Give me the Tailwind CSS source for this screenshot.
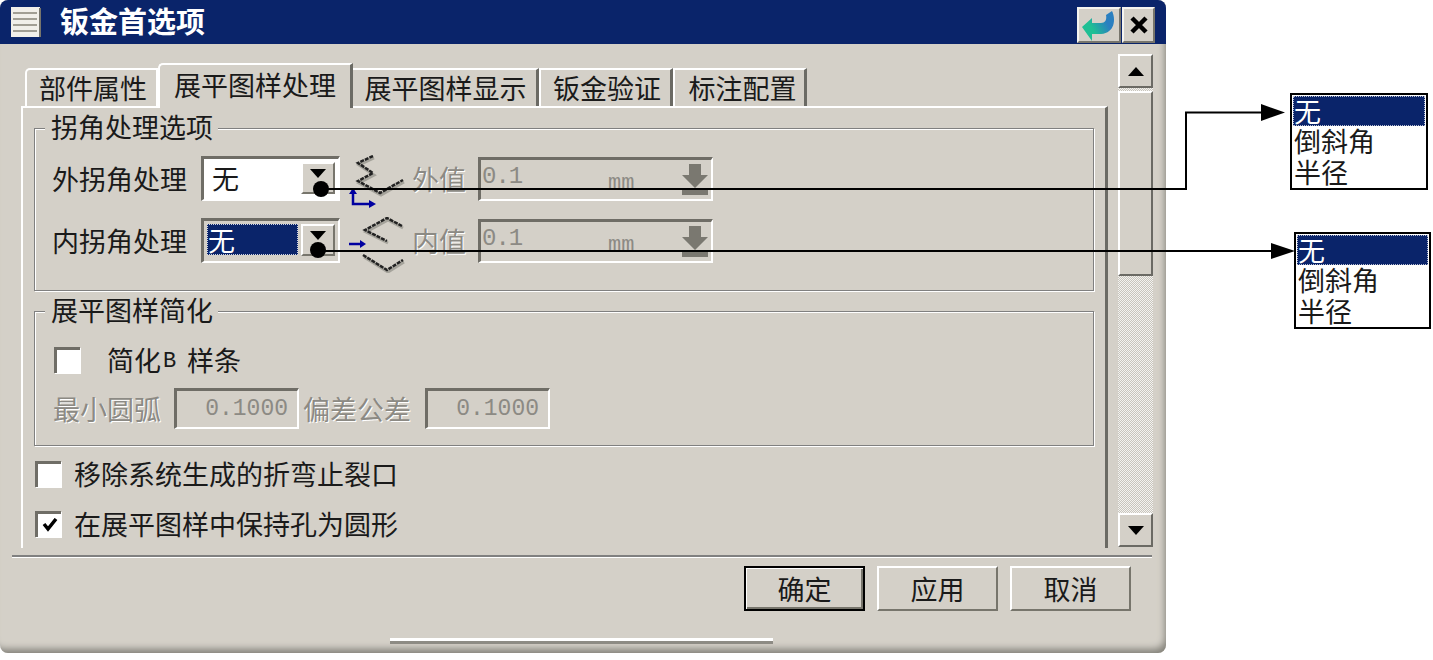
<!DOCTYPE html>
<html lang="zh"><head><meta charset="utf-8"><script src="https://cdn.jsdelivr.net/npm/@tailwindcss/browser@4"></script></head>
<body class="m-0 bg-white">
<div class="relative w-[1433px] h-[660px] overflow-hidden bg-white text-[27px] leading-none text-[#1a1a1a] font-['Noto_Sans_CJK_SC','Noto_Sans',sans-serif]">

<!-- dialog -->
<div class="flex flex-col w-[1166px] h-[653px] rounded-t-[8px] rounded-b-[8px] overflow-hidden bg-[#d4d0c8] shadow-[inset_-4px_-7px_7px_-3px_#85837b]">
  <!-- title -->
  <div class="flex items-center h-[44px] shrink-0 bg-[#0a246a] pl-[10px] pr-[11px]">
    <svg width="31" height="30" viewBox="0 0 31 30" class="shrink-0"><rect x="1" y="0" width="29" height="30" fill="#f1efea"/><rect x="29" y="1" width="2" height="29" fill="#77756c"/><g fill="#a19e94"><rect x="3" y="5" width="24" height="2"/><rect x="3" y="11" width="24" height="2"/><rect x="3" y="17" width="24" height="2"/><rect x="3" y="23" width="24" height="2"/></g></svg>
    <span class="ml-[19px] -mt-[4px] text-[29px] font-bold text-white">钣金首选项</span>
    <div class="ml-auto mt-[6px] flex gap-[1px]">
      <div class="flex items-center justify-center w-[44px] h-[36px] border-2 border-t-[#f5f4f0] border-l-[#f5f4f0] border-r-[#77756c] border-b-[#77756c] bg-[#d4d0c8]">
        <svg width="36" height="31" viewBox="0 0 36 31"><defs><linearGradient id="a" x1="0" x2="1" y1="0.7" y2="0.2"><stop offset="0.3" stop-color="#1fbf94"/><stop offset="0.75" stop-color="#2a7fc0"/></linearGradient></defs><path d="M1 17l10-9v5h9c4 0 6-3 5-8l6-4c4 8 3 22-11 23h-9v7z" fill="url(#a)"/></svg>
      </div>
      <div class="flex items-center justify-center w-[33px] h-[36px] border-2 border-t-[#f5f4f0] border-l-[#f5f4f0] border-r-[#77756c] border-b-[#77756c] bg-[#d4d0c8]">
        <svg width="20" height="20" viewBox="0 0 20 20"><path d="M3 3l14 14M17 3L3 17" stroke="#000" stroke-width="4.500"/></svg>
      </div>
    </div>
  </div>

  <!-- content -->
  <div class="flex h-[511px] shrink-0 pl-[21px]">
    <div class="w-[1087px] shrink-0 flex flex-col pt-[19px]">
      <!-- tabs -->
      <div class="relative z-10 flex items-end h-[43px] pl-[4px] shrink-0">
        <div class="flex items-center justify-center w-[133px] h-[38px] rounded-tl-[5px] border-l-2 border-t-2 border-r-2 border-l-white border-t-white border-r-white pb-[2px] pl-[3px]">部件属性</div>
        <div class="flex items-center justify-center w-[195px] h-[45px] -mb-[2px] pb-[4px] rounded-tl-[5px] bg-[#d4d0c8] border-l-2 border-t-2 border-r-[3px] border-l-white border-t-white border-r-[#6b6a64]">展平图样处理</div>
        <div class="flex items-center justify-center w-[186px] h-[38px] border-t-2 border-r-[3px] border-t-white border-r-[#6b6a64] pb-[2px] pl-[2px]">展平图样显示</div>
        <div class="flex items-center justify-center w-[134px] h-[38px] border-l-2 border-t-2 border-r-[3px] border-l-white border-t-white border-r-[#6b6a64] pb-[2px] pl-[3px]">钣金验证</div>
        <div class="flex items-center justify-center w-[134px] h-[38px] border-l-2 border-t-2 border-r-[3px] border-l-white border-t-white border-r-[#6b6a64] pb-[2px] pl-[6px]">标注配置</div>
      </div>
      <!-- panel -->
      <div class="flex flex-col h-[442px] shrink-0 border-l-2 border-t-2 border-r-[3px] border-l-white border-t-white border-r-[#6b6a64] pl-[11px] pr-[11px] pt-[20px]">

        <!-- group 1 -->
        <div class="relative flex flex-col h-[163px] w-[1060px] shrink-0 border border-[#808080] shadow-[inset_1px_1px_0_#fff,1px_1px_0_#fff] pl-[17px] pt-[27px]">
          <span class="absolute left-[10px] -top-[16px] bg-[#d4d0c8] pl-[6px] pr-[5px] h-[29px]">拐角处理选项</span>
          <div class="flex items-center h-[45px]">
            <span class="w-[149px] shrink-0">外拐角处理</span>
            <div class="flex w-[139px] h-[45px] p-[3px] border-t-[3px] border-l-[3px] border-b-2 border-r-2 border-t-[#6f6d66] border-l-[#6f6d66] border-b-white border-r-white bg-white shrink-0">
              <span class="flex-1 pl-[5px] pt-[2px]">无</span>
              <div class="flex justify-center w-[34px] h-[32px] bg-[#d4d0c8] border-2 border-t-white border-l-white border-r-[#77756c] border-b-[#77756c] pt-[5px]"><svg width="16" height="9"><path d="M0 0h16l-8 9z" fill="#000"/></svg></div>
            </div>
            <svg width="58" height="56" viewBox="0 0 58 56" class="shrink-0 ml-[9px] mt-[9px]"><path d="M24 1L9 8l15 10-15 8 22 12 23-13" fill="none" stroke="#a5a39b" stroke-width="3" transform="translate(1 2)"/><path d="M24 1L9 8l15 10-15 8 22 12 23-13" fill="none" stroke="#222" stroke-width="2.500" stroke-dasharray="4 1"/><path d="M4 35v14h18" fill="none" stroke="#0000a0" stroke-width="2.500"/><path d="M0 39l4-6 4 6zM20 45l7 4-7 4z" fill="#0000a0"/></svg>
            <span class="ml-[5px] w-[66px] shrink-0 text-[#8c8a84] [text-shadow:1px_1px_0_#fff]">外值</span>
            <div class="relative flex w-[235px] h-[44px] border-t-[3px] border-l-[3px] border-b-2 border-r-2 border-t-[#6f6d66] border-l-[#6f6d66] border-b-white border-r-white">
              <span class="absolute left-[1px] top-[5px] text-[24px] font-['Liberation_Mono',monospace] text-[#8c8a84] tracking-[-1px]">0.1</span>
              <span class="absolute left-[127px] top-[13px] text-[22px] font-['Liberation_Mono',monospace] text-[#8c8a84]">mm</span>
              <svg width="30" height="36" viewBox="0 0 30 36" class="absolute right-[1px] top-[1px]"><path d="M9 3h12v11h7L15 27 2 14h7zM2 29h26v5H2z" fill="#7a7870"/></svg>
            </div>
          </div>
          <div class="flex items-center h-[45px] mt-[17px]">
            <span class="w-[149px] shrink-0">内拐角处理</span>
            <div class="flex w-[139px] h-[45px] p-[3px] border-t-[3px] border-l-[3px] border-b-2 border-r-2 border-t-[#6f6d66] border-l-[#6f6d66] border-b-white border-r-white bg-[#d4d0c8] shrink-0">
              <span class="flex-1 mr-[3px] h-[31px] bg-[#0a246a] border border-dotted border-white/80 text-white pl-[0px] pt-[1px]">无</span>
              <div class="flex justify-center w-[34px] h-[32px] bg-[#d4d0c8] border-2 border-t-white border-l-white border-r-[#77756c] border-b-[#77756c] pt-[5px]"><svg width="16" height="9"><path d="M0 0h16l-8 9z" fill="#000"/></svg></div>
            </div>
            <svg width="58" height="56" viewBox="0 0 58 56" class="shrink-0 ml-[9px] mt-[9px]"><path d="M53 9L38 1 16 13l22 11M14 38l24 15 16-10" fill="none" stroke="#a5a39b" stroke-width="3" transform="translate(1 2)"/><path d="M53 9L38 1 16 13l22 11M14 38l24 15 16-10" fill="none" stroke="#222" stroke-width="2.500" stroke-dasharray="4 1"/><path d="M0 27h12" stroke="#0000a0" stroke-width="2.500"/><path d="M11 23l6 4-6 4z" fill="#0000a0"/></svg>
            <span class="ml-[5px] w-[66px] shrink-0 text-[#8c8a84] [text-shadow:1px_1px_0_#fff]">内值</span>
            <div class="relative flex w-[235px] h-[44px] border-t-[3px] border-l-[3px] border-b-2 border-r-2 border-t-[#6f6d66] border-l-[#6f6d66] border-b-white border-r-white">
              <span class="absolute left-[1px] top-[5px] text-[24px] font-['Liberation_Mono',monospace] text-[#8c8a84] tracking-[-1px]">0.1</span>
              <span class="absolute left-[127px] top-[13px] text-[22px] font-['Liberation_Mono',monospace] text-[#8c8a84]">mm</span>
              <svg width="30" height="36" viewBox="0 0 30 36" class="absolute right-[1px] top-[1px]"><path d="M9 3h12v11h7L15 27 2 14h7zM2 29h26v5H2z" fill="#7a7870"/></svg>
            </div>
          </div>
        </div>

        <!-- group 2 -->
        <div class="relative flex flex-col h-[135px] w-[1060px] mt-[20px] shrink-0 border border-[#808080] shadow-[inset_1px_1px_0_#fff,1px_1px_0_#fff] pl-[19px] pt-[34px]">
          <span class="absolute left-[10px] -top-[16px] bg-[#d4d0c8] pl-[6px] pr-[5px] h-[29px]">展平图样简化</span>
          <div class="flex items-center h-[27px]">
            <span class="w-[26px] h-[26px] shrink-0 bg-white border-t-[3px] border-l-[3px] border-t-[#6f6d66] border-l-[#6f6d66] shadow-[1px_1px_0_#fff]"></span>
            <span class="ml-[27px]">简化</span>
            <span class="w-[26px] pl-[2px] pt-[4px] text-[22px] font-['Liberation_Mono',monospace]">B</span>
            <span>样条</span>
          </div>
          <div class="flex items-center h-[41px] mt-[15px] -ml-[1px] text-[#8c8a84] [text-shadow:1px_1px_0_#fff]">
            <span class="w-[121px] shrink-0">最小圆弧</span>
            <div class="flex items-center justify-end w-[125px] h-[41px] pr-[9px] border-t-[3px] border-l-[3px] border-b-2 border-r-2 border-t-[#6f6d66] border-l-[#6f6d66] border-b-white border-r-white text-[23px] font-['Liberation_Mono',monospace] [text-shadow:none] shrink-0">0.1000</div>
            <span class="ml-[4px] w-[122px] shrink-0">偏差公差</span>
            <div class="flex items-center justify-end w-[125px] h-[41px] pr-[9px] border-t-[3px] border-l-[3px] border-b-2 border-r-2 border-t-[#6f6d66] border-l-[#6f6d66] border-b-white border-r-white text-[23px] font-['Liberation_Mono',monospace] [text-shadow:none] shrink-0">0.1000</div>
          </div>
        </div>

        <!-- check rows -->
        <div class="flex items-center h-[27px] mt-[14px] shrink-0 pl-[1px]">
          <span class="w-[26px] h-[26px] shrink-0 bg-white border-t-[3px] border-l-[3px] border-t-[#6f6d66] border-l-[#6f6d66] shadow-[1px_1px_0_#fff]"></span>
          <span class="ml-[13px]">移除系统生成的折弯止裂口</span>
        </div>
        <div class="flex items-center h-[27px] mt-[23px] shrink-0 pl-[1px]">
          <span class="flex items-center justify-center w-[26px] h-[26px] shrink-0 bg-white border-t-[3px] border-l-[3px] border-t-[#6f6d66] border-l-[#6f6d66] shadow-[1px_1px_0_#fff]"><svg width="16" height="14" viewBox="0 0 16 14"><path d="M2 6l4 5 8-10" fill="none" stroke="#000" stroke-width="3.500"/></svg></span>
          <span class="ml-[13px]">在展平图样中保持孔为圆形</span>
        </div>
      </div>
    </div>

    <!-- scrollbar -->
    <div class="flex flex-col w-[35px] h-[493px] mt-[10px] ml-[10px] shrink-0 bg-[repeating-conic-gradient(#c8c5bd_0_25%,#f4f3f0_0_50%)] bg-[length:2px_2px]">
      <div class="flex items-center justify-center h-[34px] shrink-0 bg-[#d4d0c8] border-2 border-t-white border-l-white border-r-[#6b6a64] border-b-[#6b6a64]"><svg width="16" height="9"><path d="M0 9h16L8 0z" fill="#000"/></svg></div>
      <div class="h-[185px] mt-[3px] shrink-0 bg-[#d4d0c8] border-2 border-t-white border-l-white border-r-[#6b6a64] border-b-[#6b6a64]"></div>
      <div class="flex items-center justify-center h-[34px] mt-auto shrink-0 bg-[#d4d0c8] border-2 border-t-white border-l-white border-r-[#6b6a64] border-b-[#6b6a64]"><svg width="16" height="9"><path d="M0 0h16L8 9z" fill="#000"/></svg></div>
    </div>
  </div>

  <!-- separator -->
  <div class="h-[3px] w-[1140px] ml-[12px] shrink-0 bg-white border-t-2 border-t-[#808080]"></div>

  <!-- buttons -->
  <div class="flex justify-end gap-[12px] pr-[35px] mt-[8px] shrink-0">
    <div class="flex items-center justify-center w-[121px] h-[45px] bg-[#d4d0c8] border-2 border-black shadow-[inset_1px_1px_0_#fff,inset_-2px_-2px_0_#77756c]">确定</div>
    <div class="flex items-center justify-center w-[121px] h-[45px] bg-[#d4d0c8] border-2 border-t-white border-l-white border-r-[#77756c] border-b-[#77756c]">应用</div>
    <div class="flex items-center justify-center w-[121px] h-[45px] bg-[#d4d0c8] border-2 border-t-white border-l-white border-r-[#77756c] border-b-[#77756c]">取消</div>
  </div>

  <!-- grip -->
  <div class="w-[383px] h-[6px] ml-[390px] mt-[27px] shrink-0 bg-white border-b-[3px] border-b-[#8d8b84]"></div>
</div>

<!-- annotation lines -->
<svg width="1433" height="660" viewBox="0 0 1433 660" class="absolute left-0 top-0 pointer-events-none">
  <circle cx="321" cy="189" r="8" fill="#000"/>
  <circle cx="318" cy="250" r="8" fill="#000"/>
  <path d="M321 189H1186V112.500H1265" fill="none" stroke="#000" stroke-width="2"/>
  <path d="M318 251H1275" fill="none" stroke="#000" stroke-width="2"/>
  <path d="M1261 104l24 8.500-24 8.500zM1271 243l24 8-24 8z" fill="#000"/>
</svg>

<!-- callout lists -->
<div class="absolute left-[1290px] top-[93px] w-[138px] h-[97px] p-[1px] bg-white border-2 border-black flex flex-col">
  <div class="h-[30px] shrink-0 bg-[#0a246a] border border-dotted border-white/70 text-white">无</div>
  <div class="h-[31px] shrink-0 pt-[1px] pl-[1px]">倒斜角</div>
  <div class="h-[31px] shrink-0 pt-[1px] pl-[1px]">半径</div>
</div>
<div class="absolute left-[1294px] top-[232px] w-[137px] h-[97px] p-[1px] bg-white border-2 border-black flex flex-col">
  <div class="h-[30px] shrink-0 bg-[#0a246a] border border-dotted border-white/70 text-white">无</div>
  <div class="h-[31px] shrink-0 pt-[1px] pl-[1px]">倒斜角</div>
  <div class="h-[31px] shrink-0 pt-[1px] pl-[1px]">半径</div>
</div>
</div>
</body></html>
